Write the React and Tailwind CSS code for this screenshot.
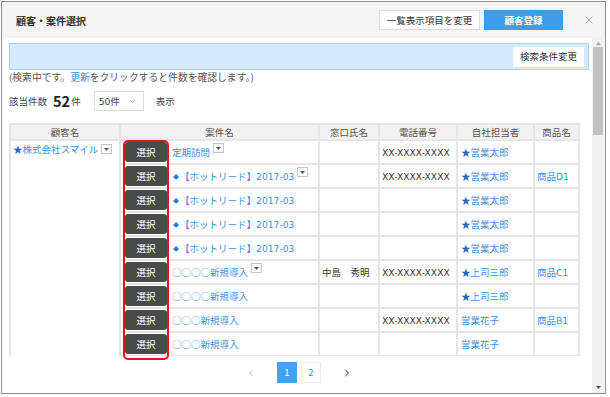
import React from "react";
import { ChevronDown, ChevronLeft, ChevronRight, X } from "lucide-react";

const PHONE = "XX-XXXX-XXXX";
const latin = "font-['DejaVu_Sans',sans-serif] text-[9.2px]";

const rows = [
  { kind: "plain", name: "定期訪問", menu: true, phone: PHONE, staff: "営業太郎", star: true },
  { kind: "hot", menu: true, phone: PHONE, staff: "営業太郎", star: true, product: "D1" },
  { kind: "hot", staff: "営業太郎", star: true },
  { kind: "hot", staff: "営業太郎", star: true },
  { kind: "hot", staff: "営業太郎", star: true },
  { kind: "plain", name: "○○○○新規導入", menu: true, contact: "中島　秀明", phone: PHONE, staff: "上司三郎", star: true, product: "C1" },
  { kind: "plain", name: "○○○○新規導入", staff: "上司三郎", star: true },
  { kind: "plain", name: "○○○新規導入", phone: PHONE, staff: "営業花子", product: "B1" },
  { kind: "plain", name: "○○○新規導入", staff: "営業花子" },
];

function MenuBox({ className = "" }) {
  return (
    <span
      className={`inline-flex w-[11px] h-[10px] shrink-0 items-center justify-center border border-[#c4c4c4] bg-white ${className}`}
    >
      <svg width="5" height="3" viewBox="0 0 5 3">
        <path d="M0 0h5L2.5 3z" fill="#555" />
      </svg>
    </span>
  );
}

const cell = "border-2 border-[#e6e6e6] h-[24px] px-[2px] align-middle whitespace-nowrap overflow-hidden";
const head = "border-2 border-[#e6e6e6] h-[16px] bg-[#f2f2f2] font-normal text-[#555] text-center";

export default function App() {
  return (
    <div className="w-[610px] h-[397px] bg-white p-px font-['Noto_Sans_CJK_JP','Noto_Sans',sans-serif] text-[9.5px] text-[#333]">
      <div className="w-[605px] h-[393px] border border-[#8d8d8d] flex flex-col overflow-hidden">
        {/* header */}
        <header className="h-[36px] shrink-0 bg-[#f4f4f4] flex items-center pl-[14px] pr-[10px]">
          <h1 className="text-[10px] font-bold text-[#333]">顧客・案件選択</h1>
          <div className="ml-auto flex items-center">
            <button className="h-[20px] w-[101px] bg-white border border-[#dddddd] text-[9.5px] text-[#333]">
              一覧表示項目を変更
            </button>
            <button className="ml-[4px] h-[20px] w-[79px] bg-[#3d9de8] text-[9.5px] font-bold text-white">
              顧客登録
            </button>
            <X size={12} strokeWidth={1.5} className="ml-[20px] text-[#9a9a9a]" />
          </div>
        </header>

        <div className="flex flex-1 min-h-0">
          <main className="w-[590px] shrink-0 pl-[7px] pr-[3px] pt-[5px] flex flex-col">
            {/* search condition bar */}
            <div className="h-[27px] border border-[#a9d3f5] bg-[#d5eafb] flex items-center justify-end pr-[4px]">
              <button className="h-[20px] w-[71px] bg-white text-[9.5px] text-[#333]">検索条件変更</button>
            </div>
            <p className="leading-[14px] text-[9.8px] text-[#555]">
              (検索中です。<span className="text-[#3d8fe0]">更新</span>をクリックすると件数を確認します。)
            </p>

            {/* count */}
            <div className="mt-[7px] h-[20px] flex items-center text-[#444]">
              <span>該当件数</span>
              <span className="ml-[6px] text-[14.5px] font-bold leading-none text-[#222]">52</span>
              <span className="ml-[1px]">件</span>
              <div className="ml-[13px] w-[50px] h-[20px] border border-[#dddddd] flex items-center pl-[4px] pr-[6px]">
                <span>
                  <span className={latin}>50</span>件
                </span>
                <ChevronDown size={9} strokeWidth={1.5} className="ml-auto text-[#777]" />
              </div>
              <span className="ml-[12px]">表示</span>
            </div>

            {/* table */}
            <div className="relative mt-[12px]">
              <div className="h-[233px] overflow-hidden">
                <table className="table-fixed border-collapse w-[569px]">
                  <colgroup>
                    <col className="w-[110px]" />
                    <col className="w-[199px]" />
                    <col className="w-[60px]" />
                    <col className="w-[78px]" />
                    <col className="w-[77px]" />
                    <col className="w-[45px]" />
                  </colgroup>
                  <thead>
                    <tr>
                      <th className={head}>顧客名</th>
                      <th className={head}>案件名</th>
                      <th className={head}>窓口氏名</th>
                      <th className={head}>電話番号</th>
                      <th className={head}>自社担当者</th>
                      <th className={head}>商品名</th>
                    </tr>
                  </thead>
                  <tbody>
                    {rows.map((r, i) => (
                      <tr key={i}>
                        {i === 0 && (
                          <td rowSpan={rows.length + 1} className="border-2 border-[#e6e6e6] align-top pl-[2px] pt-[1px]">
                            <div className="flex items-center text-[#3d8fe0]">
                              <span className="text-[#2566c8]">★</span>
                              <span>株式会社スマイル</span>
                              <MenuBox className="ml-[3px]" />
                            </div>
                          </td>
                        )}
                        <td className={cell}>
                          <div className="flex items-center pl-[2px]">
                            <button className="w-[42px] h-[20px] shrink-0 rounded-[3px] bg-[#4a4a4a] text-[9.5px] text-white">
                              選択
                            </button>
                            {r.kind === "hot" ? (
                              <span className="ml-[6px] flex items-center text-[#3d8fe0]">
                                <span className="text-[6px] text-[#2a7ad8]">◆</span>
                                <span className="ml-[1px]">
                                  【ホットリード】<span className={latin}>2017-03</span>
                                </span>
                              </span>
                            ) : (
                              <span className="ml-[5px] text-[#3d8fe0]">{r.name}</span>
                            )}
                            {r.menu && <MenuBox className="ml-[3px] self-start mt-[1px]" />}
                          </div>
                        </td>
                        <td className={cell}>{r.contact}</td>
                        <td className={cell}>{r.phone && <span className={latin}>{r.phone}</span>}</td>
                        <td className={cell}>
                          {r.staff && (
                            <span className="pl-[1px] text-[#3d8fe0]">
                              {r.star && <span className="text-[#2566c8]">★</span>}
                              {r.staff}
                            </span>
                          )}
                        </td>
                        <td className={`${cell} text-[#3d8fe0]`}>
                          {r.product && (
                            <span>
                              商品<span className={latin}>{r.product}</span>
                            </span>
                          )}
                        </td>
                      </tr>
                    ))}
                    <tr>
                      <td className={cell} />
                      <td className={cell} />
                      <td className={cell} />
                      <td className={cell} />
                      <td className={cell} />
                    </tr>
                  </tbody>
                </table>
              </div>
              {/* highlight around select buttons */}
              <div className="absolute left-[114px] top-[17px] w-[46px] h-[220px] border-2 border-[#e8101a] rounded-[5px] pointer-events-none" />
            </div>

            {/* pagination */}
            <nav className="pt-[6px] flex items-center justify-center">
              <span className="w-[20px] h-[21px] flex items-center justify-center text-[#aaa]">
                <ChevronLeft size={12} strokeWidth={1.5} />
              </span>
              <span className="ml-[16px] w-[20px] h-[21px] flex items-center justify-center bg-[#43a2f0] text-white">1</span>
              <span className="ml-[4px] w-[20px] h-[21px] flex items-center justify-center border border-[#eeeeee] text-[#3d8fe0]">2</span>
              <span className="ml-[16px] w-[20px] h-[21px] flex items-center justify-center text-[#333]">
                <ChevronRight size={12} strokeWidth={2} />
              </span>
            </nav>
          </main>

          {/* scrollbar */}
          <div className="w-[12px] shrink-0 bg-[#f1f1f1] flex flex-col items-center">
            <svg width="5" height="3" viewBox="0 0 5 3" className="mt-[4px]">
              <path d="M2.5 0L5 3H0z" fill="#a3a3a3" />
            </svg>
            <div className="mt-[2px] w-[10px] h-[88px] bg-[#c1c1c1]" />
            <svg width="5" height="3" viewBox="0 0 5 3" className="mt-auto mb-[4px]">
              <path d="M0 0h5L2.5 3z" fill="#505050" />
            </svg>
          </div>
        </div>
      </div>
    </div>
  );
}
